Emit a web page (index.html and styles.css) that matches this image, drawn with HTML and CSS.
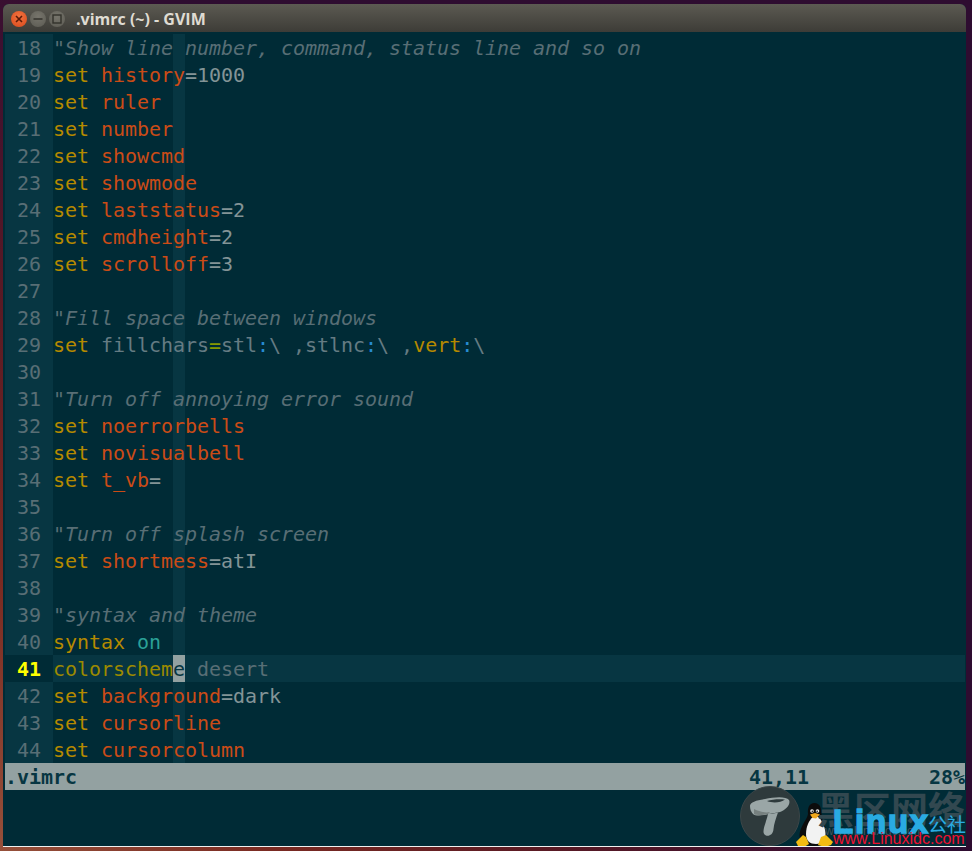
FILE: index.html
```html
<!DOCTYPE html>
<html lang="en">
<head>
<meta charset="utf-8">
<title>.vimrc (~) - GVIM</title>
<link rel="stylesheet" href="styles.css">
</head>
<body>
<div class="window">
  <header class="titlebar">
    <div class="buttons">
      <span class="btn btn-close"><svg viewBox="0 0 16 16" width="16" height="16"><path d="M5 5l6 6M11 5l-6 6" stroke="#5a1a08" stroke-width="1.6" fill="none"/></svg></span>
      <span class="btn"><svg viewBox="0 0 16 16" width="16" height="16"><path d="M3.5 8h9" stroke="#33322c" stroke-width="1.6" fill="none"/></svg></span>
      <span class="btn"><svg viewBox="0 0 16 16" width="16" height="16"><rect x="4" y="4" width="8" height="8" stroke="#33322c" stroke-width="1.4" fill="none"/></svg></span>
    </div>
    <div class="title">.vimrc (~) - GVIM</div>
  </header>
  <main class="editor">
    <div class="rows">
      <div class="row"><span class="num">18</span><span class="code c">"Show line number, command, status line and so on</span></div>
      <div class="row"><span class="num">19</span><span class="code"><b class="k">set</b> <b class="o">history</b>=1000</span></div>
      <div class="row"><span class="num">20</span><span class="code"><b class="k">set</b> <b class="o">ruler</b></span></div>
      <div class="row"><span class="num">21</span><span class="code"><b class="k">set</b> <b class="o">number</b></span></div>
      <div class="row"><span class="num">22</span><span class="code"><b class="k">set</b> <b class="o">showcmd</b></span></div>
      <div class="row"><span class="num">23</span><span class="code"><b class="k">set</b> <b class="o">showmode</b></span></div>
      <div class="row"><span class="num">24</span><span class="code"><b class="k">set</b> <b class="o">laststatus</b>=2</span></div>
      <div class="row"><span class="num">25</span><span class="code"><b class="k">set</b> <b class="o">cmdheight</b>=2</span></div>
      <div class="row"><span class="num">26</span><span class="code"><b class="k">set</b> <b class="o">scrolloff</b>=3</span></div>
      <div class="row"><span class="num">27</span><span class="code"></span></div>
      <div class="row"><span class="num">28</span><span class="code c">"Fill space between windows</span></div>
      <div class="row"><span class="num">29</span><span class="code n"><b class="k">set</b> fillchars<b class="g">=</b>stl<b class="b">:</b>\ ,stlnc<b class="b">:</b>\ ,<b class="k">vert</b><b class="b">:</b>\</span></div>
      <div class="row"><span class="num">30</span><span class="code"></span></div>
      <div class="row"><span class="num">31</span><span class="code c">"Turn off annoying error sound</span></div>
      <div class="row"><span class="num">32</span><span class="code"><b class="k">set</b> <b class="o">noerrorbells</b></span></div>
      <div class="row"><span class="num">33</span><span class="code"><b class="k">set</b> <b class="o">novisualbell</b></span></div>
      <div class="row"><span class="num">34</span><span class="code"><b class="k">set</b> <b class="o">t_vb</b>=</span></div>
      <div class="row"><span class="num">35</span><span class="code"></span></div>
      <div class="row"><span class="num">36</span><span class="code c">"Turn off splash screen</span></div>
      <div class="row"><span class="num">37</span><span class="code"><b class="k">set</b> <b class="o">shortmess</b>=atI</span></div>
      <div class="row"><span class="num">38</span><span class="code"></span></div>
      <div class="row"><span class="num">39</span><span class="code c">"syntax and theme</span></div>
      <div class="row"><span class="num">40</span><span class="code"><b class="k">syntax</b> <b class="t">on</b></span></div>
      <div class="row row-current"><span class="num">41</span><span class="code"><b class="y">colorschem</b><b class="cursor">e</b> <b class="d">desert</b></span></div>
      <div class="row"><span class="num">42</span><span class="code"><b class="k">set</b> <b class="o">background</b>=dark</span></div>
      <div class="row"><span class="num">43</span><span class="code"><b class="k">set</b> <b class="o">cursorline</b></span></div>
      <div class="row"><span class="num">44</span><span class="code"><b class="k">set</b> <b class="o">cursorcolumn</b></span></div>
    </div>
    <div class="status">
      <span class="st-name">.vimrc</span>
      <span class="st-pos">41,11</span>
      <span class="st-pct">28%</span>
    </div>
  </main>
  <aside class="logo">
    <svg class="mushroom" viewBox="0 0 60 60" width="60" height="60">
      <circle cx="30" cy="30" r="29.5" fill="#2e3a3c" stroke="#3c4648" stroke-width="1"/>
      <path d="M10 20C10 16 17 14 25 13C34 11 46 10 49 14C51 18 46 24 40 26C37 27 32 27 29 28C25 29 16 31 13 28C11 26 10 23 10 20Z" fill="#9aa6a6"/>
      <path d="M27 15C32 13 41 13 45 13.500C41 16.500 33 17.500 27 15Z" fill="#2e3a3c"/>
      <path d="M14 23C20 26 26 27 30 26L28 28C24 29 17 30 14 28Z" fill="#76807f"/>
      <path d="M28 28C31 28 36 27 38 26.500C36 32 34 38 33.500 43C33 50 27 51 24.500 48.500C22 46 25 39 26 35C27 32 27.500 30 28 28Z" fill="#9aa6a6"/>
    </svg>
    <svg class="penguin" viewBox="0 0 40 46" width="40" height="46">
      <path d="M20.500 1C15 1 13.500 6 14 12C13.500 17 6 24 5.500 33C5.500 40 12 44 20 44C28 44 33 40 33 32C32 24 28 18 27.500 12C27.500 6 26 1 20.500 1Z" fill="#0c0c0c"/>
      <path d="M19 15C15 18 12 25 12 32C12 39 16 42 22 42C28 42 32 38 31.500 31C31 24 27 17 24 15Z" fill="#f2f2f2"/>
      <path d="M16 12.500L21 11L26 12.500L22 16.500L18.500 16Z" fill="#f0a81e"/>
      <circle cx="18" cy="9" r="1.800" fill="#eee"/><circle cx="23.500" cy="9" r="1.800" fill="#eee"/>
      <circle cx="18.300" cy="9.300" r=".8" fill="#111"/><circle cx="23.200" cy="9.300" r=".8" fill="#111"/>
      <path d="M2 40L9 33L12 35L15 42L10 45L4 44Z" fill="#f3bb12"/>
      <path d="M39 40L32 33L27 35L24 43L31 45L37 43Z" fill="#f3bb12"/>
    </svg>
    <span class="wm">黑区网络</span>
    <span class="wm-sub">www.Linuxidc.com</span>
    <span class="linux">Linux</span>
    <span class="gongshe">公社</span>
    <span class="site">www.Linuxidc.com</span>
  </aside>
</div>
</body>
</html>
```
FILE: styles.css
```css
* { box-sizing: border-box; }
html, body { height: 100%; }
body {
  margin: 0;
  padding: 4px 6px 4px 3px;
  overflow: hidden;
  background: linear-gradient(225deg, #2e0c30 0%, #2e0c30 48%, #3e1030 56%, #5a1a24 70%, #7a2a22 85%, #96503a 100%);
}
.window {
  position: relative;
  height: 100%;
  display: flex;
  flex-direction: column;
  border-bottom: 1px solid #f0f0f0;
  border-radius: 6px 6px 0 0;
  overflow: hidden;
  background: #002b36;
}
.titlebar {
  flex: 0 0 28px;
  display: flex;
  align-items: center;
  padding: 1px 0 0 8px;
  background: linear-gradient(#5c5a52, #3d3c37);
}
.buttons { display: flex; gap: 3px; }
.btn {
  width: 16px;
  height: 16px;
  border-radius: 50%;
  background: radial-gradient(circle at 50% 35%, #77756c, #5b5a52);
  display: flex;
}
.btn-close { background: radial-gradient(circle at 50% 35%, #f3733f, #d9491c); }
.title {
  margin-left: 11px;
  font: bold 16px "Open Sans", "Noto Sans", sans-serif;
  color: #dfdbd2;
  white-space: nowrap;
}
.editor {
  flex: 1;
  min-height: 0;
  padding: 2px 1px 0 2px;
  font: 20px/29px "DejaVu Sans Mono", monospace;
  letter-spacing: -0.04px;
  color: #839496;
}
.rows {
  background: linear-gradient(#073642, #073642) no-repeat 168px 0 / 12px 100%;
}
.row {
  display: flex;
  height: 27px;
  white-space: pre;
}
.num {
  flex: 0 0 48px;
  padding-right: 12px;
  text-align: right;
  background: #073642;
  color: #586e75;
}
.code { flex: 1; height: 27px; }
.code b { font-weight: normal; }
.row-current { background: #073642; }
.row-current .num { background: #002b36; color: #ffff00; font-weight: bold; }
.c { color: #586e75; font-style: italic; }
.n { color: #657b83; }
.k { color: #b58900; }
.o { color: #cb4b16; }
.g { color: #859900; }
.b { color: #268bd2; }
.t { color: #2aa198; }
.y { color: #9c8a00; }
.d { color: #586e75; }
.code .cursor { background: #93a1a1; color: #073642; display: inline-block; height: 27px; line-height: 29px; vertical-align: top; }
.status {
  display: flex;
  height: 27px;
  background: #93a1a1;
  color: #073642;
  font-weight: bold;
  white-space: pre;
}
.st-name { flex: 0 0 744px; }
.st-pos { flex: 0 0 180px; }
.st-pct { flex: 0 0 36px; }
.logo {
  position: absolute;
  left: 0;
  top: 0;
  width: 100%;
  height: 100%;
  pointer-events: none;
}
.mushroom { position: absolute; left: 737px; top: 782px; }
.penguin { position: absolute; left: 791px; top: 798px; }
.wm {
  position: absolute;
  left: 814px;
  top: 782px;
  font: bold 37px/44px "Noto Sans CJK SC", sans-serif;
  color: #324850;
  white-space: nowrap;
}
.wm-sub {
  position: absolute;
  left: 822px;
  top: 820px;
  font: 12px/14px "Liberation Sans", sans-serif;
  color: #40545c;
  white-space: nowrap;
}
.linux {
  position: absolute;
  left: 830px;
  top: 798px;
  font: bold 33px/40px "Liberation Sans", sans-serif;
  color: #29abe2;
  -webkit-text-stroke: 1.5px #29abe2;
  letter-spacing: 1.8px;
  white-space: nowrap;
}
.gongshe {
  position: absolute;
  left: 925px;
  top: 809px;
  font: 19px/22px "Noto Sans CJK SC", sans-serif;
  color: #29abe2;
  white-space: nowrap;
}
.site {
  position: absolute;
  left: 830px;
  top: 826px;
  font: 16px/17px "Liberation Sans", sans-serif;
  color: #ee1030;
  white-space: nowrap;
}
```
